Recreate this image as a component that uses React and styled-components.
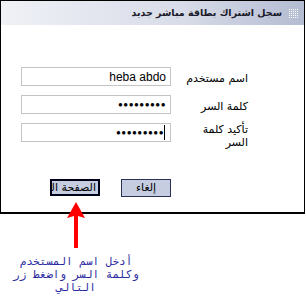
import React from 'react'
import styled, { createGlobalStyle } from 'styled-components'

const GlobalStyle = createGlobalStyle`
  body {
    margin: 0;
    background: #ffffff;
    font-family: "DejaVu Sans", sans-serif;
  }
`

const Page = styled.div`
  width: 306px;
  height: 301px;
  overflow: hidden;
`

const Dialog = styled.div`
  width: 305px;
  height: 214px;
  box-sizing: border-box;
  border: 1px solid #000000;
  border-bottom-width: 2px;
  display: flex;
  flex-direction: column;
`

const Header = styled.div`
  height: 24px;
  display: flex;
  align-items: center;
  direction: rtl;
  gap: 7px;
  padding-right: 6px;
  background: linear-gradient(to right, #eff1f6 0%, #d8dce8 60%, #b4bcd2 100%);
`

const Title = styled.span`
  font-size: 9.5px;
  font-weight: bold;
  color: #1a1a2a;
  line-height: 1;
`

const Form = styled.div`
  direction: rtl;
  display: grid;
  grid-template-columns: 70px 150px;
  grid-auto-rows: 19px;
  column-gap: 7px;
  row-gap: 9px;
  padding: 42px 56px 0 0;
`

const Label = styled.label`
  font-size: 11px;
  color: #000000;
  line-height: 13px;
  padding-top: ${p => (p.$top ? '0' : '5px')};
`

const Field = styled.div`
  box-sizing: border-box;
  height: 19px;
  border: 1px solid #c4c4c4;
  display: flex;
  align-items: center;
  padding: 0 4px;
  font-family: "Liberation Sans", sans-serif;
  font-size: 12px;
  color: #000000;
  white-space: nowrap;
`

const Dots = styled.span`
  font-size: 8px;
  letter-spacing: 0.5px;
  direction: ltr;
`

const Caret = styled.span`
  display: inline-block;
  width: 1px;
  height: 15px;
  background: #000000;
  margin-right: 1px;
`

const Buttons = styled.div`
  display: flex;
  gap: 21px;
  padding: 37px 0 0 49px;
`

const Button = styled.div`
  box-sizing: border-box;
  width: 50px;
  height: ${p => (p.$primary ? '17px' : '18px')};
  border: ${p => (p.$primary ? '2px solid #000018' : '1px solid #2a3058')};
  background: #c6cde0;
  direction: rtl;
  text-align: ${p => (p.$primary ? 'right' : 'center')};
  overflow: hidden;
  white-space: nowrap;
  font-size: 11px;
  line-height: ${p => (p.$primary ? '13px' : '16px')};
  padding: 0 2px;
  color: #000000;
`

const Note = styled.div`
  width: 152px;
  margin-top: -12px;
  display: flex;
  flex-direction: column;
  align-items: center;
`

const NoteText = styled.div`
  direction: rtl;
  text-align: center;
  font-family: "DejaVu Sans Mono", monospace;
  font-size: 11px;
  line-height: 13px;
  color: #2a2aa0;
  margin-top: 7px;
`

const GridIcon = () => (
  <svg width="9" height="9" viewBox="0 0 9 9">
    {[0, 2, 4, 6, 8].map(y =>
      [0, 2, 4, 6, 8].map(x => (
        <rect key={x + '-' + y} x={x} y={y} width="1" height="1" fill="#ffffff" />
      ))
    )}
  </svg>
)

const Arrow = () => (
  <svg width="20" height="46" viewBox="0 0 20 46">
    <polygon points="10,0 19,16 12,14 12,46 8,46 8,14 1,16" fill="#ff0000" />
  </svg>
)

const App = () => (
  <Page>
    <GlobalStyle />
    <Dialog>
      <Header>
        <GridIcon />
        <Title>سجل اشتراك بطاقة مباشر جديد</Title>
      </Header>
      <Form>
        <Label>اسم مستخدم</Label>
        <Field>heba abdo</Field>
        <Label>كلمة السر</Label>
        <Field><Dots>●●●●●●●●●</Dots></Field>
        <Label $top>تأكيد كلمة السر</Label>
        <Field><Caret /><Dots>●●●●●●●●●</Dots></Field>
      </Form>
      <Buttons>
        <Button $primary>الصفحة التالية</Button>
        <Button>إلغاء</Button>
      </Buttons>
    </Dialog>
    <Note>
      <Arrow />
      <NoteText>أدخل اسم المستخدم<br />وكلمة السر واضغط زر<br />التالي</NoteText>
    </Note>
  </Page>
)

export default App
